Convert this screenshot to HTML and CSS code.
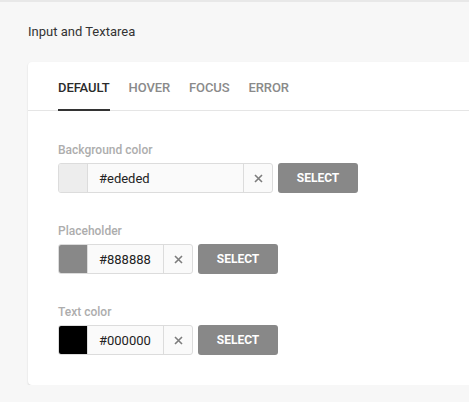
FILE: index.html
```html
<!DOCTYPE html>
<html lang="en">
<head>
  <meta charset="UTF-8">
  <title>Input and Textarea</title>
  <link rel="stylesheet" href="styles.css">
</head>
<body>
  <div class="page">
    <h2 class="title">Input and Textarea</h2>

    <div class="card">
      <div class="tabs">
        <a href="#" class="tab active">DEFAULT</a>
        <a href="#" class="tab">HOVER</a>
        <a href="#" class="tab">FOCUS</a>
        <a href="#" class="tab">ERROR</a>
      </div>

      <div class="fields">
        <div class="field">
          <label class="label">Background color</label>
          <div class="row">
            <div class="picker">
              <span class="swatch swatch-light"></span>
              <input class="hex wide" type="text" value="#ededed">
              <button class="clear"><svg width="9" height="9" viewBox="0 0 9 9"><path d="M1 1L8 8M8 1L1 8" stroke="#7d7d7d" stroke-width="1.6"/></svg></button>
            </div>
            <button class="select">SELECT</button>
          </div>
        </div>

        <div class="field">
          <label class="label">Placeholder</label>
          <div class="row">
            <div class="picker">
              <span class="swatch swatch-gray"></span>
              <input class="hex" type="text" value="#888888">
              <button class="clear"><svg width="9" height="9" viewBox="0 0 9 9"><path d="M1 1L8 8M8 1L1 8" stroke="#7d7d7d" stroke-width="1.6"/></svg></button>
            </div>
            <button class="select">SELECT</button>
          </div>
        </div>

        <div class="field">
          <label class="label">Text color</label>
          <div class="row">
            <div class="picker">
              <span class="swatch swatch-dark"></span>
              <input class="hex" type="text" value="#000000">
              <button class="clear"><svg width="9" height="9" viewBox="0 0 9 9"><path d="M1 1L8 8M8 1L1 8" stroke="#7d7d7d" stroke-width="1.6"/></svg></button>
            </div>
            <button class="select">SELECT</button>
          </div>
        </div>
      </div>
    </div>
  </div>
</body>
</html>
```

FILE: styles.css
```css
body {
  margin: 0;
  background: #f7f7f7;
  border-top: 2px solid #e8e8e8;
  font-family: Roboto, "Liberation Sans", sans-serif;
  overflow: hidden;
}
.page {
  padding: 22px 0 0 28px;
}
.title {
  margin: 0 0 22px;
  font-size: 13px;
  font-weight: 400;
  line-height: 16px;
  color: #333;
}
.card {
  background: #fff;
  border-radius: 4px 0 0 4px;
  box-shadow: 0 1px 2px rgba(0, 0, 0, 0.14);
  margin-right: -12px;
}
.tabs {
  display: flex;
  gap: 19px;
  padding: 0 30px;
  border-bottom: 1px solid #e5e5e5;
}
.tab {
  padding: 18px 0 13px;
  border-bottom: 2px solid transparent;
  margin-bottom: -1px;
  font-size: 13px;
  font-weight: 500;
  line-height: 16px;
  letter-spacing: -0.1px;
  color: #8a8a8a;
  text-decoration: none;
}
.tab.active {
  color: #2b2b2b;
  border-bottom-color: #333;
}
.fields {
  padding: 32px 30px 30px;
}
.field + .field {
  margin-top: 31px;
}
.label {
  display: block;
  margin-bottom: 6px;
  font-size: 12px;
  font-weight: 500;
  line-height: 14px;
  color: #adadad;
}
.row {
  display: flex;
  gap: 5px;
}
.picker {
  display: flex;
  height: 28px;
  border: 1px solid #dcdcdc;
  border-radius: 3px;
  background: #fafafa;
  overflow: hidden;
}
.swatch {
  width: 28px;
  border-right: 1px solid #dcdcdc;
}
.swatch-light { background: #ededed; }
.swatch-gray { background: #888888; }
.swatch-dark { background: #000000; }
.hex {
  width: 64px;
  padding: 0 0 0 11px;
  border: none;
  border-right: 1px solid #dcdcdc;
  background: transparent;
  font-family: inherit;
  font-size: 13px;
  color: #222;
  outline: none;
}
.hex.wide {
  width: 144px;
}
.clear {
  width: 28px;
  padding: 0;
  border: none;
  background: transparent;
  display: flex;
  align-items: center;
  justify-content: center;
}
.select {
  width: 80px;
  height: 30px;
  border: none;
  border-radius: 3px;
  background: #888;
  color: #fff;
  font-family: inherit;
  font-size: 12px;
  font-weight: 700;
}
```
